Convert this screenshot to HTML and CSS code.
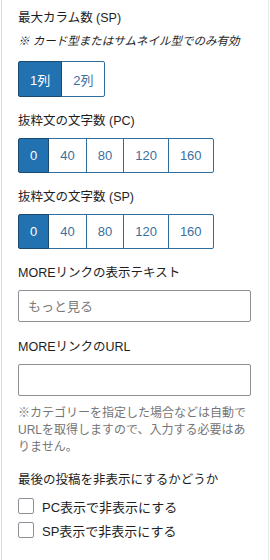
FILE: index.html
```html
<!DOCTYPE html>
<html lang="ja">
<head>
<meta charset="utf-8">
<link rel="stylesheet" href="styles.css">
</head>
<body>
<div class="panel">
  <div class="label first">最大カラム数 (SP)</div>
  <div class="note">※ カード型またはサムネイル型でのみ有効</div>
  <div class="group tall">
    <button class="btn on">1列</button><button class="btn">2列</button>
  </div>

  <div class="label">抜粋文の文字数 (PC)</div>
  <div class="group">
    <button class="btn on">0</button><button class="btn">40</button><button class="btn">80</button><button class="btn">120</button><button class="btn">160</button>
  </div>

  <div class="label">抜粋文の文字数 (SP)</div>
  <div class="group">
    <button class="btn on">0</button><button class="btn">40</button><button class="btn">80</button><button class="btn">120</button><button class="btn">160</button>
  </div>

  <div class="label">MOREリンクの表示テキスト</div>
  <input class="field" type="text" placeholder="もっと見る">

  <div class="label">MOREリンクのURL</div>
  <input class="field" type="text">

  <p class="help">※カテゴリーを指定した場合などは自動でURLを取得しますので、入力する必要はありません。</p>

  <div class="label last">最後の投稿を非表示にするかどうか</div>
  <label class="check first-check"><span class="box"></span><span>PC表示で非表示にする</span></label>
  <label class="check"><span class="box"></span><span>SP表示で非表示にする</span></label>
</div>
</body>
</html>
```

FILE: styles.css
```css
html, body {
  margin: 0;
  padding: 0;
  background: #fff;
}
body {
  font-family: "Liberation Sans", "Noto Sans CJK JP", sans-serif;
  color: #1e1e1e;
}
.panel {
  margin: 0 1px 0 1px;
  border-left: 1px solid #dcdcde;
  border-right: 1px solid #ececec;
  padding: 0 16px;
  height: 560px;
  box-sizing: border-box;
}
.label {
  font-size: 12.5px;
  line-height: 18px;
  margin-top: 16px;
}
.label.first {
  margin-top: 0;
  padding-top: 9px;
}
.note {
  font-size: 11.5px;
  line-height: 18px;
  font-style: italic;
  margin-top: 5px;
}
.group {
  display: flex;
  margin-top: 8px;
  height: 35px;
}
.group.tall {
  margin-top: 11px;
  height: 36px;
}
.group + .label {
  margin-top: 15px;
}
.btn {
  font-family: inherit;
  font-size: 13px;
  height: 100%;
  padding: 0 11px;
  margin: 0 0 0 -1px;
  background: #fff;
  color: #3a70a0;
  border: 1px solid #2f6d9c;
}
.btn:first-child {
  margin-left: 0;
  border-radius: 2px 0 0 2px;
}
.btn:last-child {
  border-radius: 0 2px 2px 0;
}
.btn.on {
  background: #2271b1;
  color: #fff;
  border-color: #1b4a70;
  position: relative;
  z-index: 1;
}
.field {
  display: block;
  box-sizing: border-box;
  width: 233px;
  height: 32px;
  margin: 8px 0 0 0;
  padding: 0 9px;
  border: 1px solid #8c8f94;
  border-radius: 2px;
  font-family: inherit;
  font-size: 13px;
  color: #1e1e1e;
}
.field::placeholder {
  color: #7a7a7a;
}
.help {
  margin: 9px 0 0 0;
  font-size: 12px;
  line-height: 17px;
  color: #757575;
}
.label.last {
  margin-top: 15px;
}
.check {
  display: flex;
  align-items: center;
  height: 20px;
  margin-top: 4px;
  font-size: 13px;
}
.check.first-check {
  margin-top: 7px;
}
.box {
  width: 16px;
  height: 16px;
  box-sizing: border-box;
  border: 1px solid #8c8f94;
  border-radius: 2px;
  margin-right: 8px;
  flex: none;
}
```
